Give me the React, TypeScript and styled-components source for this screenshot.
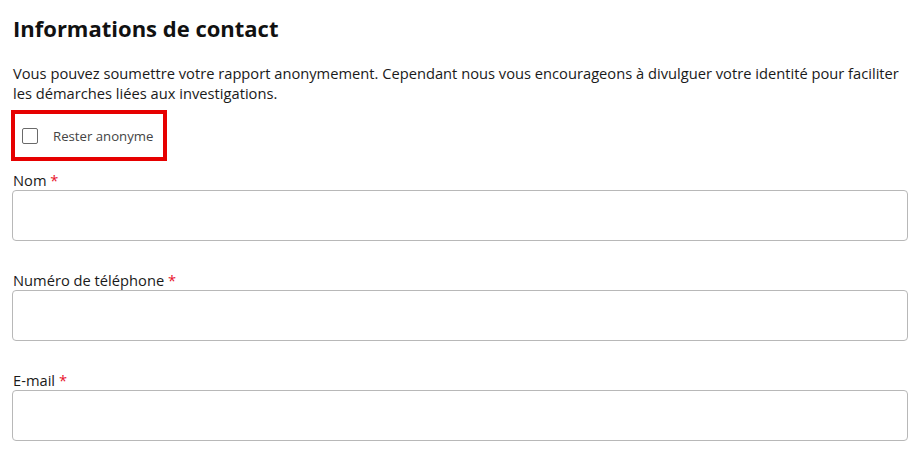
import { createGlobalStyle } from 'styled-components';
import styled from 'styled-components';

const GlobalStyle = createGlobalStyle`
  html, body {
    margin: 0;
    padding: 0;
    background: #ffffff;
  }
  body {
    font-family: 'Open Sans', 'Noto Sans', sans-serif;
    color: #1a1a1a;
  }
`;

const Page = styled.div`
  width: 920px;
  padding: 12px 12px 0 12px;
  box-sizing: border-box;
`;

const Title = styled.h2`
  font-size: 22px;
  font-weight: 700;
  line-height: 32px;
  margin: 0 0 19px 1px;
  color: #111;
`;

const Intro = styled.p`
  font-size: 14.7px;
  line-height: 20px;
  margin: 0 0 7px 1px;
  color: #1a1a1a;
`;

const Highlight = styled.div`
  display: flex;
  align-items: center;
  gap: 15px;
  border: 4px solid #e60000;
  padding: 0 0 0 7px;
  width: 156px;
  height: 51px;
  box-sizing: border-box;
  margin-left: -1px;
`;

const Box = styled.span`
  width: 16px;
  height: 16px;
  border: 1.5px solid #6a6a6a;
  border-radius: 2px;
  box-sizing: border-box;
  flex: none;
`;

const CheckLabel = styled.span`
  font-size: 13.2px;
  color: #444;
  white-space: nowrap;
`;

const Field = styled.div`
  display: flex;
  flex-direction: column;
  margin-top: 9px;
  & + & {
    margin-top: 29px;
  }
`;

const Label = styled.label`
  font-size: 14.7px;
  line-height: 20px;
  margin-left: 1px;
  color: #1a1a1a;
`;

const Star = styled.span`
  color: #e8102a;
`;

const Input = styled.div`
  height: 51px;
  width: 896px;
  box-sizing: border-box;
  border: 1px solid #b8b8b8;
  border-radius: 4px;
  background: #fff;
`;

const fields = ['Nom', 'Numéro de téléphone', 'E-mail'];

export default function App() {
  return (
    <>
      <GlobalStyle />
      <Page>
        <Title>Informations de contact</Title>
        <Intro>
          Vous pouvez soumettre votre rapport anonymement. Cependant nous vous encourageons à divulguer votre identité pour faciliter les démarches liées aux investigations.
        </Intro>
        <Highlight>
          <Box />
          <CheckLabel>Rester anonyme</CheckLabel>
        </Highlight>
        {fields.map((f) => (
          <Field key={f}>
            <Label>
              {f} <Star>*</Star>
            </Label>
            <Input />
          </Field>
        ))}
      </Page>
    </>
  );
}
